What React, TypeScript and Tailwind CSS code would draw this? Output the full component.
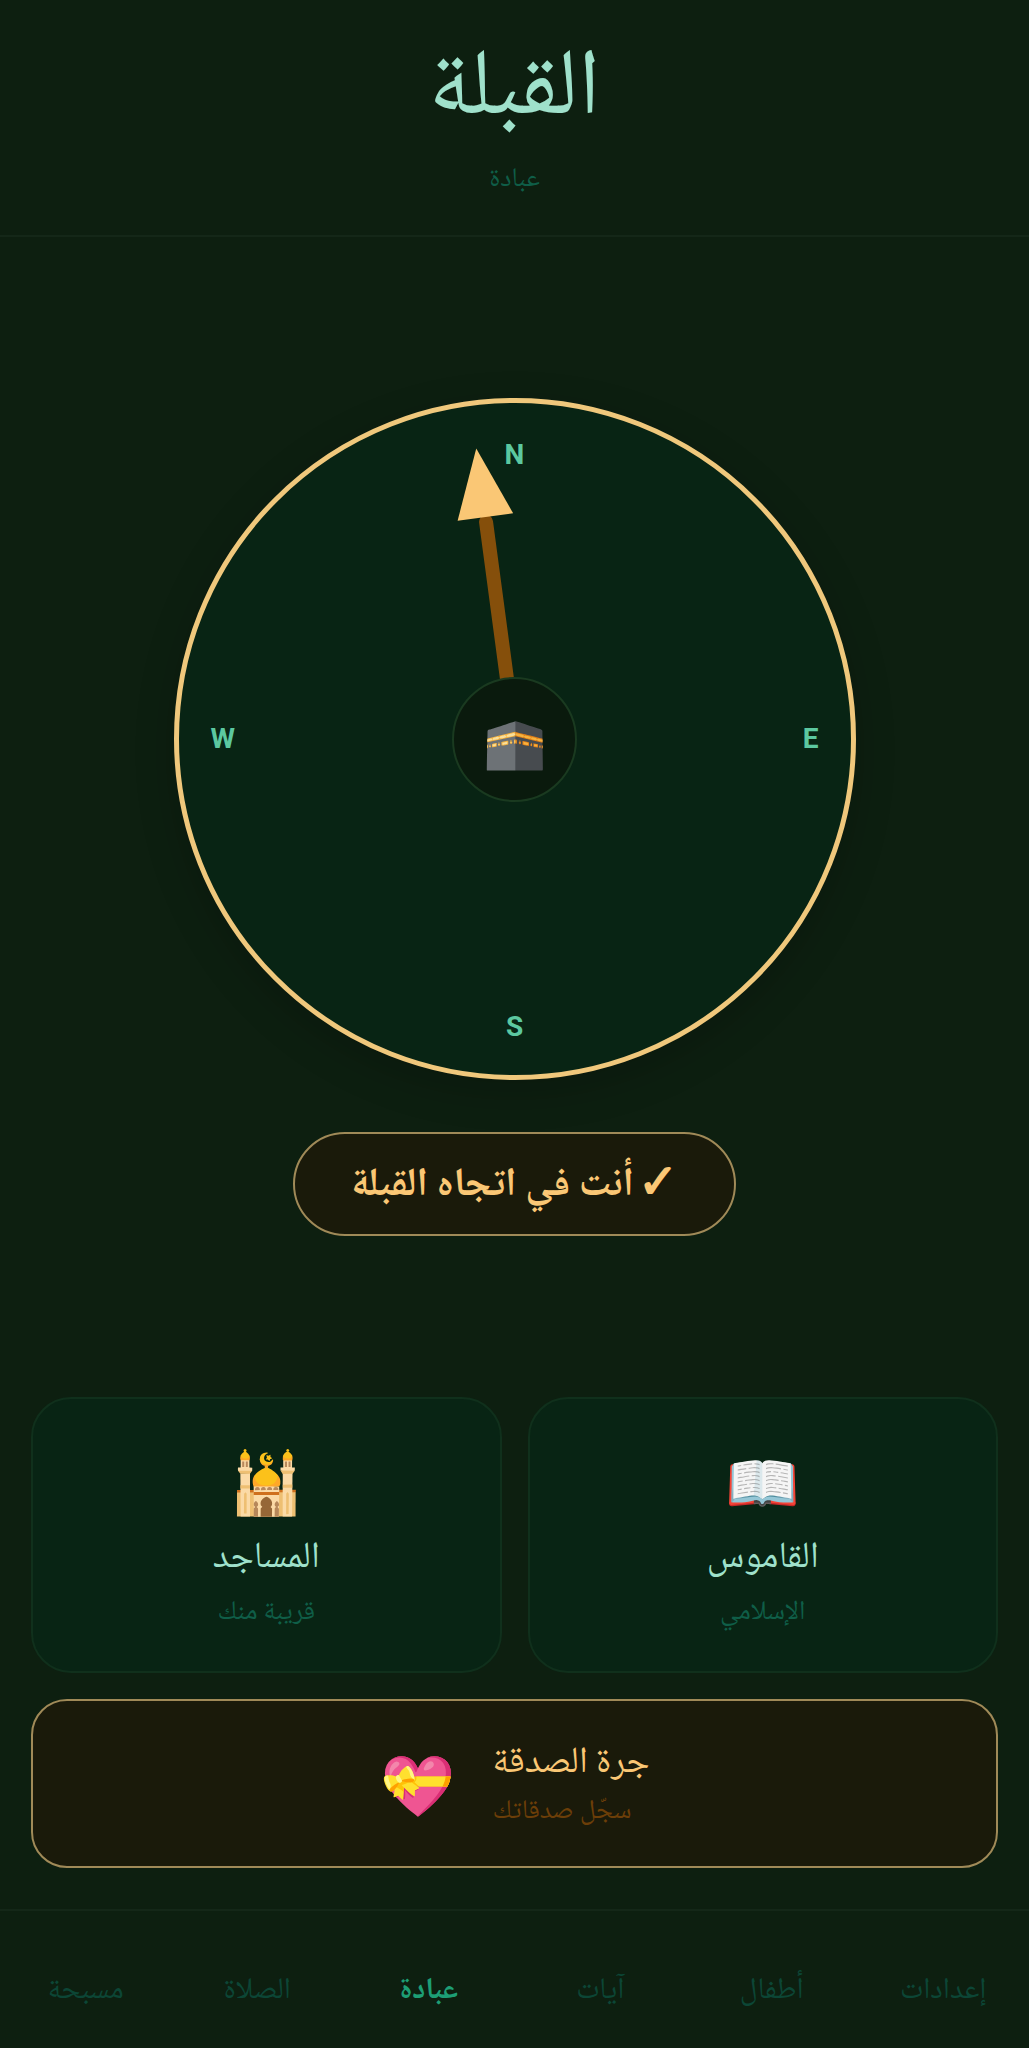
import React from 'react';

interface Tool {
  icon: string;
  title: string;
  subtitle: string;
}

const TOOLS: Tool[] = [
  { icon: '📖', title: 'القاموس', subtitle: 'الإسلامي' },
  { icon: '🕌', title: 'المساجد', subtitle: 'قريبة منك' },
];

const TABS = ['إعدادات', 'أطفال', 'آيات', 'عبادة', 'الصلاة', 'مسبحة'];
const ACTIVE_TAB = 'عبادة';

function Compass({ heading }: { heading: number }) {
  return (
    <div className="relative size-[682px] max-w-full rounded-full border-[5px] border-[#f0c87c] bg-[#082414] font-[Roboto,sans-serif] text-[28px] leading-8 font-bold text-[#5cc8a0] shadow-[0_12px_40px_rgba(0,0,0,0.2)]">
      <span className="absolute inset-x-0 top-9 text-center">N</span>
      <span className="absolute inset-x-0 bottom-8 text-center">S</span>
      <span className="absolute inset-y-0 left-8 flex items-center">W</span>
      <span className="absolute inset-y-0 right-8 flex items-center">E</span>

      {/* Needle */}
      <svg viewBox="-336 -336 672 672" className="absolute inset-0 size-full">
        <g transform={`rotate(${heading})`}>
          <rect x="-7" y="-226" width="14" height="226" rx="7" fill="#854f0b" />
          <path d="M0 -293 L28 -224 L-28 -224 Z" fill="#fac775" />
        </g>
      </svg>

      {/* Hub */}
      <div className="absolute inset-0 m-auto flex size-[125px] items-center justify-center rounded-full border-2 border-[#1a3a20] bg-[#0a1a0d] pt-1.5 text-[51px] leading-none">
        🕋
      </div>
    </div>
  );
}

function ToolCard({ icon, title, subtitle }: Tool) {
  return (
    <button className="flex h-[276px] flex-1 flex-col items-center justify-center rounded-[40px] border-2 border-[#10301c] bg-[#082414] pt-5">
      <span className="text-[60px] leading-[76px]">{icon}</span>
      <span className="text-[37px] leading-[60px] text-[#9fe1cb]">{title}</span>
      <span className="text-[27px] leading-[48px] text-[#0f5e48]">{subtitle}</span>
    </button>
  );
}

export default function App() {
  return (
    <div dir="rtl" className="flex min-h-screen flex-col bg-[#0d1f10] font-['Noto_Naskh_Arabic','Noto_Sans',serif]">
      <header className="flex flex-col items-center border-b-2 border-[#142718] pt-6 pb-[37px]">
        <h1 className="text-[94px] leading-[138px] text-[#9fe1cb]">القبلة</h1>
        <p className="text-[27px] leading-9 text-[#0f5e48]">عبادة</p>
      </header>

      <main className="flex flex-1 flex-col">
        <section className="flex flex-1 flex-col items-center justify-center">
          <Compass heading={-7.6} />
          <p className="mt-[52px] flex h-[104px] items-center gap-1 rounded-full border-2 border-[#a08a58] bg-[#1a1a0a] px-14 pt-1 text-[40px] font-bold text-[#fac775]">
            <span className="pt-1 text-[48px] leading-none">✓</span>
            <span>أنت في اتجاه القبلة</span>
          </p>
        </section>

        <section className="flex flex-col gap-[26px] px-[31px] pb-[41px]">
          <div className="flex gap-[26px]">
            {TOOLS.map((tool) => (
              <ToolCard key={tool.title} {...tool} />
            ))}
          </div>

          <button className="flex h-[169px] items-center justify-center gap-[38px] rounded-[36px] border-2 border-[#a08a58] bg-[#1a1a0a] pt-1">
            <span className="flex flex-col text-end">
              <span className="text-[37px] leading-[52px] text-[#fac775]">جرة الصدقة</span>
              <span className="text-[27px] leading-[44px] text-[#6c3e08]">سجّل صدقاتك</span>
            </span>
            <span className="pt-4 text-[60px] leading-none">💝</span>
          </button>
        </section>
      </main>

      <nav className="flex h-[139px] border-t-2 border-[#142718] pt-6">
        {TABS.map((tab) => (
          <a
            key={tab}
            href="#"
            className={
              tab === ACTIVE_TAB
                ? 'flex flex-1 items-center justify-center text-[30px] font-bold text-[#1d9e75]'
                : 'flex flex-1 items-center justify-center text-[30px] text-[#0c4636]'
            }
          >
            {tab}
          </a>
        ))}
      </nav>
    </div>
  );
}
